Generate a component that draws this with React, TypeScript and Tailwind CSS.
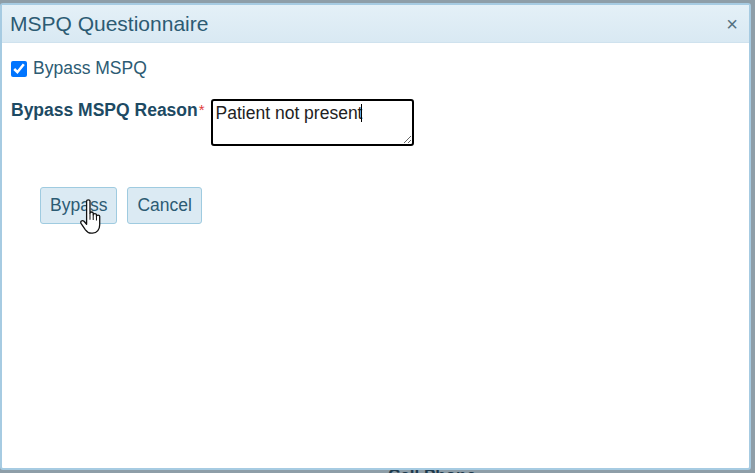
import React from 'react';

const HandCursor = () => (
  <svg width="21" height="35" viewBox="1 1 16 27" className="absolute left-[40px] top-[12px] pointer-events-none">
    <path
      d="M6 2.5c0-1.2 2.6-1.2 2.6 0v9.5c0-1.3 2.5-1.3 2.5 0v1.2c0-1.3 2.5-1.3 2.5 0v1.2c0-1.3 2.5-1.3 2.5 0v6.5c0 3.5-2 6.5-5.5 6.5H9.5c-2 0-3.2-1-4.4-2.6L1.8 20c-1-1.6.8-3 2.2-1.8L6 20.5z"
      fill="#fff"
      stroke="#111"
      strokeWidth="1"
      strokeLinejoin="round"
    />
    <path d="M8.6 12v5M11.1 13.2v4M13.6 14.4v3.2" stroke="#111" strokeWidth="0.8" />
  </svg>
);

const App = () => {
  return (
    <div className="relative w-[755px] h-[473px] overflow-hidden bg-[#8e9ea8] pt-[3px] font-['Liberation_Sans',Arial,sans-serif]">
      <div className="relative z-10 w-[751px] h-[467px] bg-white border-2 border-[#a6cbe2] rounded-[3px] flex flex-col">
        {/* Header */}
        <div className="h-[38px] flex items-center justify-between pl-[8px] pr-[11px] bg-gradient-to-b from-[#e4f0f7] to-[#d9e9f3] border-b border-[#cfe2ee]">
          <h1 className="text-[21px] text-[#2c5b73] leading-none">MSPQ Questionnaire</h1>
          <span className="text-[#55707f] text-[20px] leading-none">×</span>
        </div>
        {/* Body */}
        <div className="flex flex-col pl-[9px] pt-[17px]">
          <label className="flex items-center gap-[6px] h-[17px]">
            <input type="checkbox" checked readOnly className="w-[16px] h-[16px] m-0 accent-[#0075ff]" />
            <span className="text-[17.5px] text-[#2c5b73] leading-none">Bypass MSPQ</span>
          </label>
          <div className="flex items-start mt-[22px]">
            <span className="text-[17.5px] font-bold text-[#1d4a63] leading-none mt-[3px]">Bypass MSPQ Reason</span>
            <span className="text-[#e23b3b] text-[15px] leading-none mt-[3px] ml-[1px]">*</span>
            <div className="ml-[6px] relative">
              <textarea
                readOnly
                defaultValue="Patient not present"
                className="block w-[203px] h-[47px] border-2 border-black rounded-[3px] px-[3px] pt-[2px] text-[17.5px] text-[#222] leading-[20px] outline-none font-['Liberation_Sans',Arial,sans-serif]"
              />
              <span className="absolute left-[150px] top-[5px] w-px h-[18px] bg-black" />
            </div>
          </div>
          <div className="flex gap-[10px] ml-[29px] mt-[41px]">
            <div className="relative">
              <button className="h-[37px] px-[9px] rounded-[3px] border border-[#9fcbe0] bg-[#dbeaf3] text-[17.5px] text-[#2c5b73]">
                Bypass
              </button>
              <HandCursor />
            </div>
            <button className="h-[37px] px-[9px] rounded-[3px] border border-[#9fcbe0] bg-[#dbeaf3] text-[17.5px] text-[#2c5b73]">
              Cancel
            </button>
          </div>
        </div>
      </div>
      <div className="absolute left-[388px] top-[463px] text-[17px] font-bold text-[#1d3a4d]">Cell Phone</div>
    </div>
  );
};

export default App;
